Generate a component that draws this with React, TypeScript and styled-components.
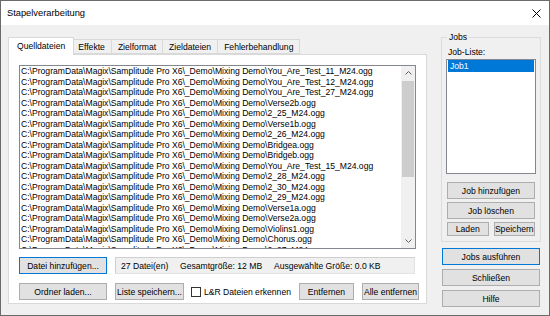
import { FC } from 'react';
import styled, { createGlobalStyle } from 'styled-components';

const GlobalStyle = createGlobalStyle`
  html, body {
    margin: 0;
    padding: 0;
    background: #f0f0f0;
  }
  body {
    font-family: "Liberation Sans", Arial, sans-serif;
    font-size: 8.6px;
    color: #000;
  }
`;

const files = [
  'You_Are_Test_11_M24.ogg',
  'You_Are_Test_12_M24.ogg',
  'You_Are_Test_27_M24.ogg',
  'Verse2b.ogg',
  '2_25_M24.ogg',
  'Verse1b.ogg',
  '2_26_M24.ogg',
  'Bridgea.ogg',
  'Bridgeb.ogg',
  'You_Are_Test_15_M24.ogg',
  '2_28_M24.ogg',
  '2_30_M24.ogg',
  '2_29_M24.ogg',
  'Verse1a.ogg',
  'Verse2a.ogg',
  'Violins1.ogg',
  'Chorus.ogg',
  '2_27_M24.ogg',
];

const basePath = 'C:\\ProgramData\\Magix\\Samplitude Pro X6\\_Demo\\Mixing Demo\\';

const tabs = ['Quelldateien', 'Effekte', 'Zielformat', 'Zieldateien', 'Fehlerbehandlung'];

const Window = styled.div`
  width: 550px;
  height: 316px;
  box-sizing: border-box;
  border: 1px solid #6a6a6a;
  background: #f0f0f0;
  display: flex;
  flex-direction: column;
  overflow: hidden;
`;

const TitleBar = styled.div`
  height: 24px;
  flex: none;
  background: #fff;
  display: flex;
  align-items: center;
  justify-content: space-between;
  padding: 0 8px 0 6px;
  font-size: 9.3px;
`;

const Body = styled.div`
  flex: 1;
  display: flex;
  gap: 14px;
  padding: 7px 8px 0 7px;
`;

const LeftColumn = styled.div`
  width: 419px;
  padding-top: 5px;
  display: flex;
  flex-direction: column;
`;

const TabStrip = styled.div`
  height: 17px;
  display: flex;
  align-items: flex-end;
  padding-left: 2px;
  position: relative;
  z-index: 1;
`;

const Tab = styled.div<{ $active?: boolean }>`
  box-sizing: border-box;
  height: ${(p) => (p.$active ? '18px' : '15px')};
  margin: ${(p) => (p.$active ? '0 -2px -1px -2px' : '0 0 0 -1px')};
  padding: ${(p) => (p.$active ? '3px 8px 0' : '2px 6px 0')};
  border: 1px solid #d9d9d9;
  border-bottom: ${(p) => (p.$active ? 'none' : '1px solid #d9d9d9')};
  background: ${(p) => (p.$active ? '#fff' : '#f0f0f0')};
  position: relative;
  z-index: ${(p) => (p.$active ? 2 : 1)};
  white-space: nowrap;
  line-height: 10px;
`;

const Panel = styled.div`
  height: 250px;
  box-sizing: border-box;
  border: 1px solid #d9d9d9;
  background: #fff;
  padding: 10px 10px 0 10px;
  display: flex;
  flex-direction: column;
`;

const FileList = styled.div`
  height: 184px;
  box-sizing: border-box;
  border: 1px solid #828790;
  background: #fff;
  display: flex;
`;

const Rows = styled.div`
  flex: 1;
  overflow: hidden;
  padding: 0 0 0 1px;
`;

const Row = styled.div`
  height: 10.5px;
  line-height: 10.5px;
  white-space: nowrap;
`;

const ScrollBar = styled.div`
  width: 14px;
  background: #f0f0f0;
  display: flex;
  flex-direction: column;
`;

const Arrow = styled.div`
  height: 14px;
  display: flex;
  align-items: center;
  justify-content: center;
`;

const Track = styled.div`
  flex: 1;
  padding: 1px 1px;
  display: flex;
  flex-direction: column;
`;

const Thumb = styled.div`
  height: 96px;
  background: #cdcdcd;
`;

const ButtonRow = styled.div<{ $top: number }>`
  display: flex;
  align-items: center;
  gap: 8px;
  margin-top: ${(p) => p.$top}px;
  height: 17px;
`;

const Button = styled.div<{ $w?: number; $h?: number; $default?: boolean; $grow?: boolean }>`
  box-sizing: border-box;
  width: ${(p) => (p.$w ? `${p.$w}px` : p.$grow ? 'auto' : '100%')};
  height: ${(p) => p.$h ?? 17}px;
  flex: ${(p) => (p.$grow ? '1 1 0' : 'none')};
  background: #e1e1e1;
  border: 1px solid ${(p) => (p.$default ? '#0078d7' : '#adadad')};
  display: flex;
  align-items: center;
  justify-content: center;
  white-space: nowrap;
`;

const StatusBox = styled.div`
  flex: 1;
  height: 17px;
  box-sizing: border-box;
  border: 1px solid #e3e3e3;
  border-left-color: #cfcfcf;
  border-top-color: #cfcfcf;
  background: #f0f0f0;
  display: flex;
  align-items: center;
  padding-left: 5px;
  margin-right: 1px;
  white-space: nowrap;
`;

const StatusItem = styled.span<{ $w?: number }>`
  width: ${(p) => (p.$w ? `${p.$w}px` : 'auto')};
  flex: none;
`;

const CheckLabel = styled.label`
  flex: 1;
  display: flex;
  align-items: center;
  gap: 3px;
  white-space: nowrap;
  margin-left: -1px;
`;

const CheckBox = styled.span`
  width: 10px;
  height: 10px;
  box-sizing: border-box;
  border: 1px solid #333;
  background: #fff;
`;

const RightColumn = styled.div`
  width: 100px;
  display: flex;
  flex-direction: column;
`;

const GroupBox = styled.fieldset`
  margin: 0;
  padding: 0 4px 5px;
  border: 1px solid #dcdcdc;
  display: flex;
  flex-direction: column;
`;

const Legend = styled.legend`
  padding: 0 2px;
  margin-left: 1px;
  line-height: 10px;
`;

const FieldLabel = styled.div`
  line-height: 10px;
  margin: 5px 0 2px 2px;
`;

const JobList = styled.div`
  height: 115px;
  box-sizing: border-box;
  border: 1px solid #828790;
  background: #fff;
  padding: 0 1px;
`;

const JobItem = styled.div<{ $selected?: boolean }>`
  height: 12px;
  line-height: 12px;
  padding-left: 2px;
  background: ${(p) => (p.$selected ? '#0078d7' : 'transparent')};
  color: ${(p) => (p.$selected ? '#fff' : '#000')};
`;

const ButtonStack = styled.div<{ $top: number; $gap?: number }>`
  display: flex;
  flex-direction: column;
  gap: ${(p) => p.$gap ?? 3}px;
  margin-top: ${(p) => p.$top}px;
  padding: 0 1px;
`;

const SplitRow = styled.div`
  display: flex;
  gap: 5px;
`;

const CloseIcon: FC = () => (
  <svg width="9" height="9" viewBox="0 0 9 9">
    <path d="M0.5 0.5 L8.5 8.5 M8.5 0.5 L0.5 8.5" stroke="#000" strokeWidth="1" />
  </svg>
);

const Chevron: FC<{ up?: boolean }> = ({ up }) => (
  <svg width="7" height="4" viewBox="0 0 7 4">
    <path
      d={up ? 'M0.5 3.5 L3.5 0.5 L6.5 3.5' : 'M0.5 0.5 L3.5 3.5 L6.5 0.5'}
      stroke="#606060"
      strokeWidth="1"
      fill="none"
    />
  </svg>
);

export default function App() {
  return (
    <>
      <GlobalStyle />
      <Window>
        <TitleBar>
          <span>Stapelverarbeitung</span>
          <CloseIcon />
        </TitleBar>
        <Body>
          <LeftColumn>
            <TabStrip>
              {tabs.map((t, i) => (
                <Tab key={t} $active={i === 0}>
                  {t}
                </Tab>
              ))}
            </TabStrip>
            <Panel>
              <FileList>
                <Rows>
                  {files.map((f, i) => (
                    <Row key={i}>
                      {basePath}
                      {f}
                    </Row>
                  ))}
                </Rows>
                <ScrollBar>
                  <Arrow>
                    <Chevron up />
                  </Arrow>
                  <Track>
                    <Thumb />
                  </Track>
                  <Arrow>
                    <Chevron />
                  </Arrow>
                </ScrollBar>
              </FileList>
              <ButtonRow $top={8}>
                <Button $w={88} $default>
                  Datei hinzufügen...
                </Button>
                <StatusBox>
                  <StatusItem $w={59}>27 Datei(en)</StatusItem>
                  <StatusItem $w={94}>Gesamtgröße: 12 MB</StatusItem>
                  <StatusItem>Ausgewählte Größe: 0.0 KB</StatusItem>
                </StatusBox>
              </ButtonRow>
              <ButtonRow $top={9}>
                <Button $w={88}>Ordner laden...</Button>
                <Button $w={69}>Liste speichern...</Button>
                <CheckLabel>
                  <CheckBox />
                  L&amp;R Dateien erkennen
                </CheckLabel>
                <Button $w={55}>Entfernen</Button>
                <Button $w={57}>Alle entfernen</Button>
              </ButtonRow>
            </Panel>
          </LeftColumn>
          <RightColumn>
            <GroupBox>
              <Legend>Jobs</Legend>
              <FieldLabel>Job-Liste:</FieldLabel>
              <JobList>
                <JobItem $selected>Job1</JobItem>
              </JobList>
              <ButtonStack $top={8}>
                <Button>Job hinzufügen</Button>
                <Button>Job löschen</Button>
                <SplitRow>
                  <Button $h={14} $grow>
                    Laden
                  </Button>
                  <Button $h={14} $grow>
                    Speichern
                  </Button>
                </SplitRow>
              </ButtonStack>
            </GroupBox>
            <ButtonStack $top={6} $gap={4}>
              <Button $default>Jobs ausführen</Button>
              <Button>Schließen</Button>
              <Button>Hilfe</Button>
            </ButtonStack>
          </RightColumn>
        </Body>
      </Window>
    </>
  );
}
